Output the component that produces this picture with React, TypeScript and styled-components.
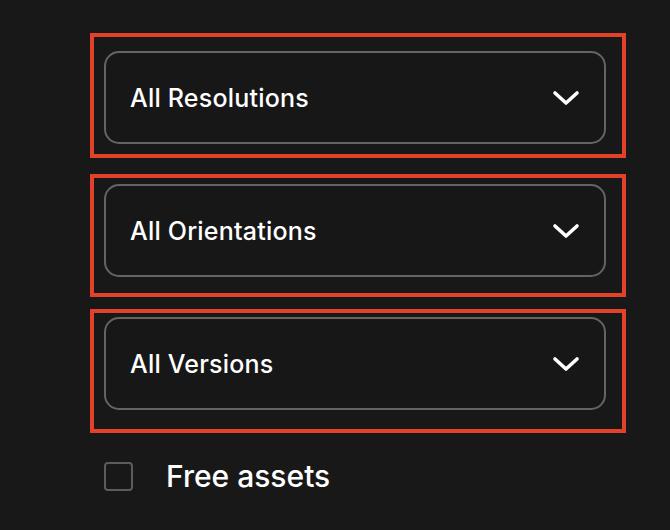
import styled, { createGlobalStyle } from "styled-components";

const GlobalStyle = createGlobalStyle`
  html, body {
    margin: 0;
    padding: 0;
    background-color: #181818;
  }
  body {
    font-family: Inter, "Liberation Sans", sans-serif;
    color: #ffffff;
  }
`;

export const Page = styled.div`
  width: 670px;
  height: 530px;
  box-sizing: border-box;
  padding: 51px 0 0 104px;
  background-color: #181818;
  overflow: hidden;
`;

export const Filters = styled.div`
  width: 502px;
  display: flex;
  flex-direction: column;
  gap: 40px;
`;

export const Field = styled.div`
  position: relative;
`;

/* red annotation frame drawn over each dropdown */
export const Highlight = styled.div<{ $top: number; $bottom: number }>`
  position: absolute;
  left: -14px;
  right: -20px;
  top: ${(p) => -p.$top}px;
  bottom: ${(p) => -p.$bottom}px;
  border: 4px solid #e4412a;
  pointer-events: none;
`;

export const Select = styled.button`
  width: 100%;
  height: 93px;
  box-sizing: border-box;
  display: flex;
  align-items: center;
  justify-content: space-between;
  padding: 0 24px 0 24px;
  background-color: #171717;
  border: 2px solid #646464;
  border-radius: 15px;
  color: #ffffff;
  font-family: Inter, "Liberation Sans", sans-serif;
  font-size: 25px;
  font-weight: 500;
  letter-spacing: 0.2px;
  cursor: pointer;
`;

export const Chevron = styled.svg`
  width: 28px;
  height: 18px;
  flex-shrink: 0;
`;

export const CheckRow = styled.label`
  display: flex;
  align-items: center;
  gap: 33px;
  margin-top: 48px;
  cursor: pointer;
`;

export const Box = styled.span`
  width: 29px;
  height: 29px;
  box-sizing: border-box;
  border: 2px solid #5c5c5c;
  border-radius: 4px;
`;

export const CheckLabel = styled.span`
  font-size: 30px;
  font-weight: 500;
  color: #ffffff;
  letter-spacing: 0px;
`;

const fields = [
  { label: "All Resolutions", top: 18, bottom: 14 },
  { label: "All Orientations", top: 10, bottom: 20 },
  { label: "All Versions", top: 8, bottom: 23 },
];

const App = (): JSX.Element => {
  return (
    <Page>
      <GlobalStyle />
      <Filters>
        {fields.map((f) => (
          <Field key={f.label}>
            <Select>
              <span>{f.label}</span>
              <Chevron viewBox="0 0 28 18" fill="none">
                <path
                  d="M3 4 L14 14 L25 4"
                  stroke="#ffffff"
                  strokeWidth="3.6"
                  strokeLinecap="round"
                  strokeLinejoin="round"
                />
              </Chevron>
            </Select>
            <Highlight $top={f.top} $bottom={f.bottom} />
          </Field>
        ))}
      </Filters>
      <CheckRow>
        <Box />
        <CheckLabel>Free assets</CheckLabel>
      </CheckRow>
    </Page>
  );
};

export default App;
